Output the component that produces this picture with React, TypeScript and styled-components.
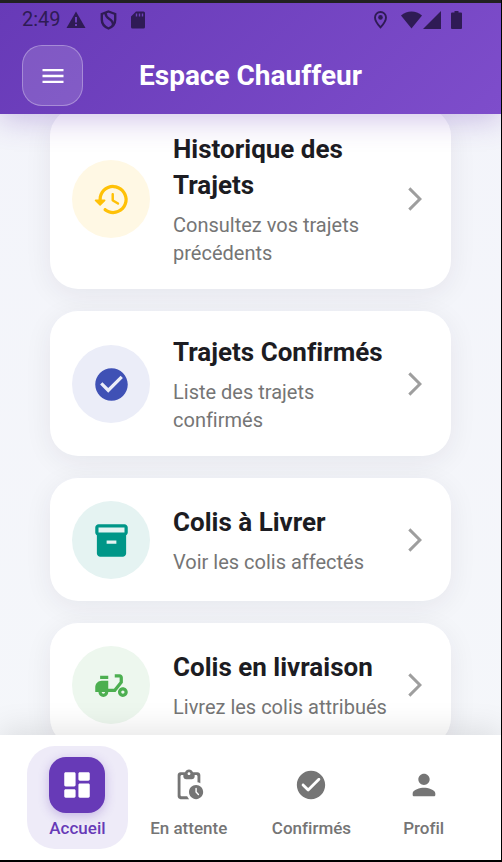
import React from "react";
import styled, { createGlobalStyle } from "styled-components";
import { MdArrowForwardIos, MdCheckCircle, MdDeliveryDining, MdInventory2, MdMenu } from "react-icons/md";

const GlobalStyle = createGlobalStyle`
  *, *::before, *::after { box-sizing: border-box; }
  body { margin: 0; background: #000; }
  button { font: inherit; color: inherit; cursor: pointer; }
`;

const Screen = styled.div`
  display: flex;
  flex-direction: column;
  height: 100vh;
  overflow: hidden;
  border: solid #000;
  border-width: 0 1px 2px 0;
  background: linear-gradient(180deg, #f3f4fa, #f5f7fa);
  color: #1c1c22;
  font-family: Roboto, "Liberation Sans", sans-serif;
  font-variant-ligatures: none;
`;

const Header = styled.header`
  position: relative;
  z-index: 2;
  flex: none;
  padding-bottom: 8px;
  border-top: 3px solid #212121;
  background: linear-gradient(135deg, #673ab7, #7e4dcb);
  background-origin: border-box;
  box-shadow: 0 6px 28px rgba(103, 58, 183, 0.3);
`;

const StatusBar = styled.div`
  display: flex;
  align-items: center;
  justify-content: space-between;
  height: 33px;
  padding: 0 39px 0 22px;
  color: #2f1b55;
  font-size: 20px;
  line-height: 33px;
`;

const StatusGroup = styled.div<{ $gap: number }>`
  display: flex;
  align-items: center;
  gap: ${(p) => p.$gap}px;
`;

const Toolbar = styled.div`
  display: grid;
  grid-template-columns: 61px 1fr 61px;
  align-items: center;
  margin-top: 9px;
  padding: 0 22px;
`;

const MenuButton = styled.button`
  display: grid;
  place-items: center;
  width: 61px;
  height: 61px;
  padding: 0;
  border: 1px solid rgba(255, 255, 255, 0.3);
  border-radius: 20px;
  background: rgba(255, 255, 255, 0.15);
  color: #fff;
`;

const PageTitle = styled.h1`
  margin: 0;
  color: #fff;
  font-size: 28px;
  font-weight: 700;
  line-height: 36px;
  text-align: center;
  white-space: nowrap;
`;

const Content = styled.main`
  flex: 1;
  min-height: 0;
  overflow: hidden;
`;

const CardList = styled.div`
  display: flex;
  flex-direction: column;
  gap: 22px;
  margin-top: -6px;
  padding: 0 50px;
`;

const Card = styled.button`
  display: flex;
  align-items: center;
  gap: 23px;
  width: 100%;
  padding: 23px 22px 22px;
  border: 0;
  border-radius: 28px;
  background: #fff;
  box-shadow: 0 6px 28px rgba(40, 30, 60, 0.07);
  text-align: left;
`;

const CardIcon = styled.span<{ $color: string; $tint: string }>`
  display: grid;
  flex: none;
  place-items: center;
  width: 78px;
  height: 78px;
  border-radius: 50%;
  background: ${(p) => p.$tint};
  color: ${(p) => p.$color};
`;

const CardText = styled.span`
  display: flex;
  flex: 1;
  flex-direction: column;
  gap: 8px;
  min-width: 0;
`;

const CardTitle = styled.span`
  font-size: 26px;
  font-weight: 700;
  line-height: 36px;
`;

const CardNote = styled.span`
  color: #757575;
  font-size: 20px;
  line-height: 28px;
`;

const Chevron = styled(MdArrowForwardIos)`
  flex: none;
  margin-left: -16px;
  color: #9e9e9e;
`;

const BottomNav = styled.nav`
  position: relative;
  z-index: 2;
  display: flex;
  flex: none;
  justify-content: space-around;
  padding: 11px 27px;
  background: #fff;
  box-shadow: 0 -6px 28px rgba(0, 0, 0, 0.1);
`;

const NavItem = styled.button<{ $active?: boolean }>`
  display: flex;
  flex-direction: column;
  align-items: center;
  gap: 5px;
  padding: 11px 22px;
  border: 0;
  border-radius: 28px;
  background: ${(p) => (p.$active ? "#eeebf8" : "transparent")};
  color: ${(p) => (p.$active ? "#673ab7" : "#757575")};
  font-size: 17px;
  font-weight: 500;
  line-height: 20px;
  white-space: nowrap;
`;

const NavIcon = styled.span<{ $active?: boolean }>`
  display: grid;
  place-items: center;
  width: 56px;
  height: 56px;
  border-radius: 17px;
  background: ${(p) => (p.$active ? "#673ab7" : "transparent")};
  color: ${(p) => (p.$active ? "#fff" : "inherit")};
  box-shadow: ${(p) => (p.$active ? "0 3px 11px rgba(103, 58, 183, 0.3)" : "none")};
`;

type GlyphProps = { d: string; size: number };

const Glyph = ({ d, size }: GlyphProps) => (
  <svg width={size} height={size} viewBox="0 0 24 24" fill="currentColor" aria-hidden="true">
    <path d={d} />
  </svg>
);

const paths = {
  history:
    "M13.26 3C8.17 2.86 4 6.95 4 12H2.21c-.45 0-.67.54-.35.85l2.79 2.8c.2.2.51.2.71 0l2.79-2.8c.31-.31.09-.85-.36-.85H6c0-3.9 3.18-7.05 7.1-7 3.72.05 6.85 3.18 6.9 6.9.05 3.91-3.1 7.1-7 7.1-1.61 0-3.1-.55-4.28-1.48-.4-.31-.96-.28-1.32.08-.42.42-.39 1.13.08 1.49C9 20.29 10.91 21 13 21c5.05 0 9.14-4.17 9-9.26-.13-4.69-4.05-8.61-8.74-8.74zM12.75 8c-.41 0-.75.34-.75.75v3.68c0 .35.19.68.49.86l3.12 1.85c.36.21.82.09 1.03-.26.21-.36.09-.82-.26-1.03l-2.88-1.71v-3.4c0-.4-.34-.74-.75-.74z",
  dashboard:
    "M4 13h6c.55 0 1-.45 1-1V4c0-.55-.45-1-1-1H4c-.55 0-1 .45-1 1v8c0 .55.45 1 1 1zm0 8h6c.55 0 1-.45 1-1v-4c0-.55-.45-1-1-1H4c-.55 0-1 .45-1 1v4c0 .55.45 1 1 1zm10 0h6c.55 0 1-.45 1-1v-8c0-.55-.45-1-1-1h-6c-.55 0-1 .45-1 1v8c0 .55.45 1 1 1zM13 4v4c0 .55.45 1 1 1h6c.55 0 1-.45 1-1V4c0-.55-.45-1-1-1h-6c-.55 0-1 .45-1 1z",
  pending:
    "M17 12c-2.76 0-5 2.24-5 5s2.24 5 5 5 5-2.24 5-5-2.24-5-5-5zm1.29 7-1.65-1.65c-.09-.09-.14-.22-.14-.35v-2.49c0-.28.22-.5.5-.5s.5.22.5.5v2.29l1.5 1.5c.2.2.2.51 0 .71s-.51.19-.71-.01zM18 3h-3.18C14.4 1.84 13.3 1 12 1s-2.4.84-2.82 2H6c-1.1 0-2 .9-2 2v15c0 1.1.9 2 2 2h6.11c-.59-.57-1.07-1.25-1.42-2H7c-.55 0-1-.45-1-1V6c0-.55.45-1 1-1h1v1c0 1.1.9 2 2 2h4c1.1 0 2-.9 2-2V5h1c.55 0 1 .45 1 1v4.08c.71.1 1.38.31 2 .6V5c0-1.1-.9-2-2-2zm-6 2c-.55 0-1-.45-1-1s.45-1 1-1 1 .45 1 1-.45 1-1 1z",
  check:
    "M12 2C6.48 2 2 6.48 2 12s4.48 10 10 10 10-4.48 10-10S17.52 2 12 2zM9.29 16.29 5.7 12.7c-.39-.39-.39-1.02 0-1.41.39-.39 1.02-.39 1.41 0L10 14.17l6.88-6.88c.39-.39 1.02-.39 1.41 0 .39.39.39 1.02 0 1.41l-7.59 7.59c-.38.39-1.02.39-1.41 0z",
  person:
    "M12 12c2.21 0 4-1.79 4-4s-1.79-4-4-4-4 1.79-4 4 1.79 4 4 4zm0 2c-2.67 0-8 1.34-8 4v1c0 .55.45 1 1 1h14c.55 0 1-.45 1-1v-1c0-2.66-5.33-4-8-4z",
};

const cards = [
  {
    title: "Historique des Trajets",
    note: "Consultez vos trajets précédents",
    color: "#ffc107",
    tint: "#fff8e4",
    icon: <Glyph d={paths.history} size={39} />,
  },
  {
    title: "Trajets Confirmés",
    note: "Liste des trajets confirmés",
    color: "#3f51b5",
    tint: "#ebedf8",
    icon: <MdCheckCircle size={39} />,
  },
  {
    title: "Colis à Livrer",
    note: "Voir les colis affectés",
    color: "#009688",
    tint: "#e5f3f2",
    icon: <MdInventory2 size={39} />,
  },
  {
    title: "Colis en livraison",
    note: "Livrez les colis attribués",
    color: "#4caf50",
    tint: "#edf7ee",
    icon: <MdDeliveryDining size={39} />,
  },
];

const tabs = [
  { label: "Accueil", icon: paths.dashboard, active: true },
  { label: "En attente", icon: paths.pending },
  { label: "Confirmés", icon: paths.check },
  { label: "Profil", icon: paths.person },
];

const WarningIcon = () => (
  <svg width="20" height="18" viewBox="0 0 20 18" aria-hidden="true">
    <path d="M10 0.500 19.500 17H0.500z" fill="currentColor" />
    <path d="M10 6v5.500M10 13v2" stroke="#6d40bb" strokeWidth="2" />
  </svg>
);

const ShieldIcon = () => (
  <svg width="17" height="20" viewBox="0 0 17 20" fill="none" stroke="currentColor" strokeWidth="2.400" aria-hidden="true">
    <path d="M8.500 1.500 15.200 4v5.500c0 4-2.600 7.300-6.700 9C4.400 16.800 1.800 13.500 1.800 9.500V4z" />
    <path d="M5.500 3c0 7 8 5 7.500 12" />
  </svg>
);

const SdCardIcon = () => (
  <svg width="14" height="18" viewBox="0 0 14 18" aria-hidden="true">
    <path d="M5 0.500h7.500A1.500 1.500 0 0 1 14 2v14a1.500 1.500 0 0 1-1.500 1.500h-11A1.500 1.500 0 0 1 0 16V5.500z" fill="currentColor" />
    <path d="M5.500 2.500v3M8.500 2.500v3M11.500 2.500v3" stroke="#6d40bb" strokeWidth="1.400" />
  </svg>
);

const PinIcon = () => (
  <svg width="13" height="18" viewBox="0 0 13 18" aria-hidden="true">
    <path
      d="M6.500 1C3.400 1 1 3.400 1 6.400c0 3.900 5.500 10 5.500 10s5.500-6.100 5.500-10C12 3.400 9.600 1 6.500 1z"
      fill="none"
      stroke="currentColor"
      strokeWidth="1.900"
    />
    <circle cx="6.500" cy="6.400" r="2.300" fill="currentColor" />
  </svg>
);

const SignalIcons = () => (
  <svg width="40" height="18" viewBox="0 0 40 18" fill="currentColor" aria-hidden="true">
    <path d="M0 4.500C6-1 15-1 21 4.500L10.500 17.500z" />
    <path d="M40 0v18H22z" />
  </svg>
);

const BatteryIcon = () => (
  <svg width="11" height="18" viewBox="0 0 11 18" fill="currentColor" aria-hidden="true">
    <path d="M3.500 0h4v1.500H10a1 1 0 0 1 1 1V17a1 1 0 0 1-1 1H1a1 1 0 0 1-1-1V2.500a1 1 0 0 1 1-1h2.500z" />
  </svg>
);

export default function App() {
  return (
    <>
      <GlobalStyle />
      <Screen>
        <Header>
          <StatusBar>
            <StatusGroup $gap={14}>
              <StatusGroup $gap={5}>
                <span>2:49</span>
                <WarningIcon />
              </StatusGroup>
              <ShieldIcon />
              <SdCardIcon />
            </StatusGroup>
            <StatusGroup $gap={10}>
              <StatusGroup $gap={14}>
                <PinIcon />
                <SignalIcons />
              </StatusGroup>
              <BatteryIcon />
            </StatusGroup>
          </StatusBar>
          <Toolbar>
            <MenuButton aria-label="Menu">
              <MdMenu size={28} />
            </MenuButton>
            <PageTitle>Espace Chauffeur</PageTitle>
          </Toolbar>
        </Header>
        <Content>
          <CardList>
            {cards.map((card) => (
              <Card key={card.title}>
                <CardIcon $color={card.color} $tint={card.tint}>
                  {card.icon}
                </CardIcon>
                <CardText>
                  <CardTitle>{card.title}</CardTitle>
                  <CardNote>{card.note}</CardNote>
                </CardText>
                <Chevron size={28} />
              </Card>
            ))}
          </CardList>
        </Content>
        <BottomNav>
          {tabs.map((tab) => (
            <NavItem key={tab.label} $active={tab.active} aria-current={tab.active ? "page" : undefined}>
              <NavIcon $active={tab.active}>
                <Glyph d={tab.icon} size={34} />
              </NavIcon>
              {tab.label}
            </NavItem>
          ))}
        </BottomNav>
      </Screen>
    </>
  );
}
